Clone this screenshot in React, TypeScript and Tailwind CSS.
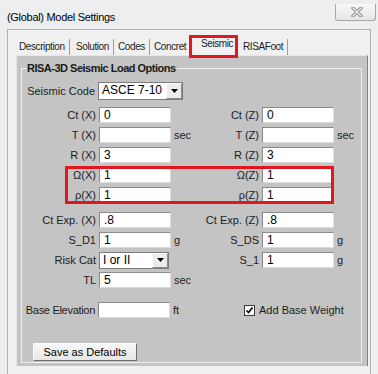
import type { ReactNode } from 'react';

const font = { fontFamily: '"Liberation Sans", Arial, sans-serif' };

function Field({ value = '' }: { value?: string }) {
  return (
    <div className="h-[16px] w-[72px] bg-white border border-t-[#8a8a8a] border-l-[#8a8a8a] border-b-[#dcdcdc] border-r-[#dcdcdc] pl-[4px] text-[12px] leading-[14px] text-black">
      {value}
    </div>
  );
}

function Select({ value, wide }: { value: string; wide?: boolean }) {
  return (
    <div
      className={
        wide
          ? 'flex h-[18px] w-[85px] bg-white border border-[#7c7c7c]'
          : 'flex h-[17px] w-[70px] bg-white border border-[#7c7c7c]'
      }
    >
      <div className="flex-1 pl-[3px] text-[12px] leading-[15px] text-black">{value}</div>
      <div className="w-[16px] h-full bg-[#ececec] border border-t-white border-l-white border-b-[#8a8a8a] border-r-[#8a8a8a] flex items-center justify-center">
        <svg width="7" height="4" viewBox="0 0 7 4">
          <path d="M0 0h7L3.5 4z" fill="#000" />
        </svg>
      </div>
    </div>
  );
}

function Row({
  l,
  left,
  lu,
  r,
  right,
  ru,
}: {
  l: string;
  left: ReactNode;
  lu?: string;
  r?: string;
  right?: ReactNode;
  ru?: string;
}) {
  return (
    <div className="flex items-center h-[20px]">
      <div className="w-[77px] text-right pr-[3px] whitespace-nowrap">{l}</div>
      <div className="w-[72px]">{left}</div>
      <div className="w-[30px] pl-[3px]">{lu}</div>
      <div className="w-[61px] text-right pr-[3px] whitespace-nowrap">{r}</div>
      {right}
      <div className="pl-[3px]">{ru}</div>
    </div>
  );
}

export default function App() {
  return (
    <div
      className="relative w-[378px] h-[374px] overflow-hidden bg-[#eceef0] text-[11px] text-[#1c1c1c] flex flex-col"
      style={font}
    >
      {/* title bar */}
      <div className="h-[29px] flex items-start justify-between pl-[7px]">
        <div className="mt-[9px] text-[11px] tracking-[-0.3px] text-black">(Global) Model Settings</div>
        <div className="mt-[4px] mr-[2px] w-[41px] h-[17px] rounded-b-[3px] border border-t-0 border-[#a4a8ac] bg-gradient-to-b from-[#f8f8f8] to-[#e4e5e7] flex items-center justify-center">
          <svg width="12" height="10" viewBox="0 0 12 10" className="ml-[2px]">
            <path d="M2 1l8 8M10 1L2 9" stroke="#8a8d91" strokeWidth="3.2" strokeLinecap="square" />
            <path d="M2 1l8 8M10 1L2 9" stroke="#f2f2f2" strokeWidth="1.2" strokeLinecap="square" />
          </svg>
        </div>
      </div>

      {/* client */}
      <div className="flex-1 flex px-[7px]">
        <div className="flex-1 bg-[#f0f0f0] border-t border-l border-r border-[#aeb2b6] pl-[8px] pt-[6px]">
          {/* tabs */}
          <div className="flex items-end h-[19px] pl-[1px] text-[10px] tracking-[-0.4px]">
            <div className="h-[16px] w-[53px] border-r border-[#9c9c9c] pl-[2px] leading-[16px]">Description</div>
            <div className="h-[16px] w-[44px] border-r border-[#9c9c9c] pl-[6px] leading-[16px]">Solution</div>
            <div className="h-[16px] w-[36px] border-r border-[#9c9c9c] pl-[4px] leading-[16px]">Codes</div>
            <div className="h-[16px] w-[39px] pl-[4px] leading-[16px] overflow-hidden whitespace-nowrap">Concret</div>
            <div className="h-[20px] w-[49px] pl-[12px] leading-[17px]">Seismic</div>
            <div className="h-[16px] w-[50px] border-r border-[#9c9c9c] pl-[5px] leading-[16px]">RISAFoot</div>
          </div>

          {/* panel */}
          <div className="w-[352px] h-[311px] bg-[#c4c4c4] border-t border-l border-[#e6e6e6] border-r border-r-[#808080] pt-[5px] pl-[4px]">
            <fieldset className="w-[341px] border border-[#eeeeee] pb-[1px]">
              <legend className="ml-[4px] px-[1px] font-bold leading-[14px] tracking-[-0.5px] text-[#1a1a1a]">
                RISA-3D Seismic Load Options
              </legend>
              <div className="pt-[7px] flex flex-col">
                <div className="flex items-center h-[18px]">
                  <div className="w-[76px] text-right pr-[3px] whitespace-nowrap">Seismic Code</div>
                  <Select value="ASCE 7-10" wide />
                </div>

                <div className="mt-[5px]">
                  <Row l="Ct (X)" left={<Field value="0" />} r="Ct (Z)" right={<Field value="0" />} />
                  <Row l="T (X)" left={<Field />} lu="sec" r="T (Z)" right={<Field />} ru="sec" />
                  <Row l="R (X)" left={<Field value="3" />} r="R (Z)" right={<Field value="3" />} />
                  <Row l="Ω(X)" left={<Field value="1" />} r="Ω(Z)" right={<Field value="1" />} />
                  <Row l="ρ(X)" left={<Field value="1" />} r="ρ(Z)" right={<Field value="1" />} />
                </div>

                <div className="mt-[5px]">
                  <Row l="Ct Exp. (X)" left={<Field value=".8" />} r="Ct Exp. (Z)" right={<Field value=".8" />} />
                  <Row l="S_D1" left={<Field value="1" />} lu="g" r="S_DS" right={<Field value="1" />} ru="g" />
                  <Row l="Risk Cat" left={<Select value="I or II" />} r="S_1" right={<Field value="1" />} ru="g" />
                  <Row l="TL" left={<Field value="5" />} lu="sec" />
                </div>

                <div className="mt-[10px] flex items-center h-[20px]">
                  <div className="w-[76px] text-right pr-[3px] whitespace-nowrap tracking-[-0.3px]">Base Elevation</div>
                  <Field />
                  <div className="pl-[3px] w-[30px]">ft</div>
                  <div className="ml-[44px] w-[11px] h-[11px] bg-white border border-[#3a3a3a] flex items-center justify-center">
                    <svg width="9" height="9" viewBox="0 0 9 9">
                      <path d="M1.5 4.5l2 2L7.5 1.5" stroke="#000" strokeWidth="1.6" fill="none" />
                    </svg>
                  </div>
                  <div className="pl-[4px] whitespace-nowrap">Add Base Weight</div>
                </div>

                <div className="mt-[23px] ml-[11px] w-[104px] h-[18px] bg-gradient-to-b from-[#f8f8f8] to-[#e6e6e6] border border-t-white border-l-white border-b-[#6c6c6c] border-r-[#6c6c6c] text-center leading-[16px] text-black">
                  Save as Defaults
                </div>
              </div>
            </fieldset>
          </div>
        </div>
      </div>

      {/* annotation boxes */}
      <div className="absolute left-[189px] top-[35px] w-[49px] h-[23px] border-[3px] border-[#e3161e]" />
      <div className="absolute left-[65px] top-[166px] w-[269px] h-[38px] border-[3px] border-[#e3161e]" />
    </div>
  );
}
